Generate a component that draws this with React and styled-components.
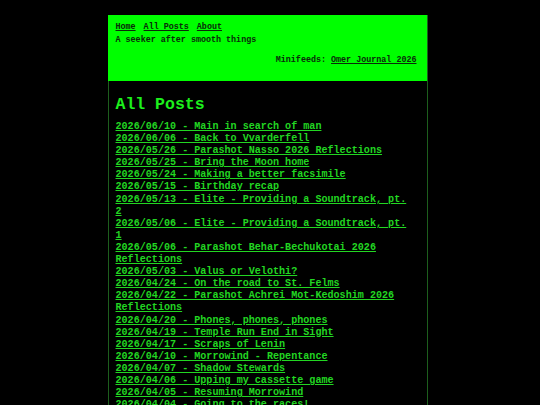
import React from "react";
import styled, { createGlobalStyle } from "styled-components";

const Global = createGlobalStyle`
  html, body { margin: 0; padding: 0; background: #000; }
  body {
    padding-right: 5px;
    font-family: "Liberation Mono", "DejaVu Sans Mono", monospace;
    font-weight: bold;
  }
`;

const Page = styled.div`
  width: 320px;
  margin: 15px auto 0;
  box-sizing: border-box;
`;

const Header = styled.header`
  background: #00ff00;
  color: #0a2a0a;
  padding: 6px 10px 14px 8px;
  font-size: 8.4px;
  line-height: 13px;
  border-right: 1px solid #1d5e1d;
`;

const Nav = styled.nav`
  display: flex;
  gap: 8px;
`;

const HeadLink = styled.a`
  color: #0a2a0a;
  text-decoration: underline;
`;

const Tagline = styled.div`
  margin-bottom: 7px;
`;

const Feeds = styled.div`
  text-align: right;
`;

const Main = styled.main`
  border: 1px solid #1d5e1d;
  border-top: none;
  padding: 13px 10px 0 7px;
  min-height: 400px;
`;

const Title = styled.h1`
  margin: 0 0 5px;
  color: #1cf01c;
  font-size: 16.5px;
  line-height: 22px;
  font-weight: bold;
`;

const List = styled.ul`
  list-style: none;
  margin: 0;
  padding: 0;
  font-size: 10.1px;
  line-height: 12.1px;
`;

const Item = styled.li`
  margin: 0;
`;

const PostLink = styled.a`
  color: #22d622;
  text-decoration: underline;
`;

const posts = [
  "2026/06/10 - Main in search of man",
  "2026/06/06 - Back to Vvarderfell",
  "2026/05/26 - Parashot Nasso 2026 Reflections",
  "2026/05/25 - Bring the Moon home",
  "2026/05/24 - Making a better facsimile",
  "2026/05/15 - Birthday recap",
  "2026/05/13 - Elite - Providing a Soundtrack, pt. 2",
  "2026/05/06 - Elite - Providing a Soundtrack, pt. 1",
  "2026/05/06 - Parashot Behar-Bechukotai 2026 Reflections",
  "2026/05/03 - Valus or Velothi?",
  "2026/04/24 - On the road to St. Felms",
  "2026/04/22 - Parashot Achrei Mot-Kedoshim 2026 Reflections",
  "2026/04/20 - Phones, phones, phones",
  "2026/04/19 - Temple Run End in Sight",
  "2026/04/17 - Scraps of Lenin",
  "2026/04/10 - Morrowind - Repentance",
  "2026/04/07 - Shadow Stewards",
  "2026/04/06 - Upping my cassette game",
  "2026/04/05 - Resuming Morrowind",
  "2026/04/04 - Going to the races!",
  "2026/04/01 - Passover 2026",
];

export default function App() {
  return (
    <>
      <Global />
      <Page>
        <Header>
          <Nav>
            <HeadLink href="#">Home</HeadLink>
            <HeadLink href="#">All Posts</HeadLink>
            <HeadLink href="#">About</HeadLink>
          </Nav>
          <Tagline>A seeker after smooth things</Tagline>
          <Feeds>
            Minifeeds: <HeadLink href="#">Omer Journal 2026</HeadLink>
          </Feeds>
        </Header>
        <Main>
          <Title>All Posts</Title>
          <List>
            {posts.map((p) => (
              <Item key={p}>
                <PostLink href="#">{p}</PostLink>
              </Item>
            ))}
          </List>
        </Main>
      </Page>
    </>
  );
}
